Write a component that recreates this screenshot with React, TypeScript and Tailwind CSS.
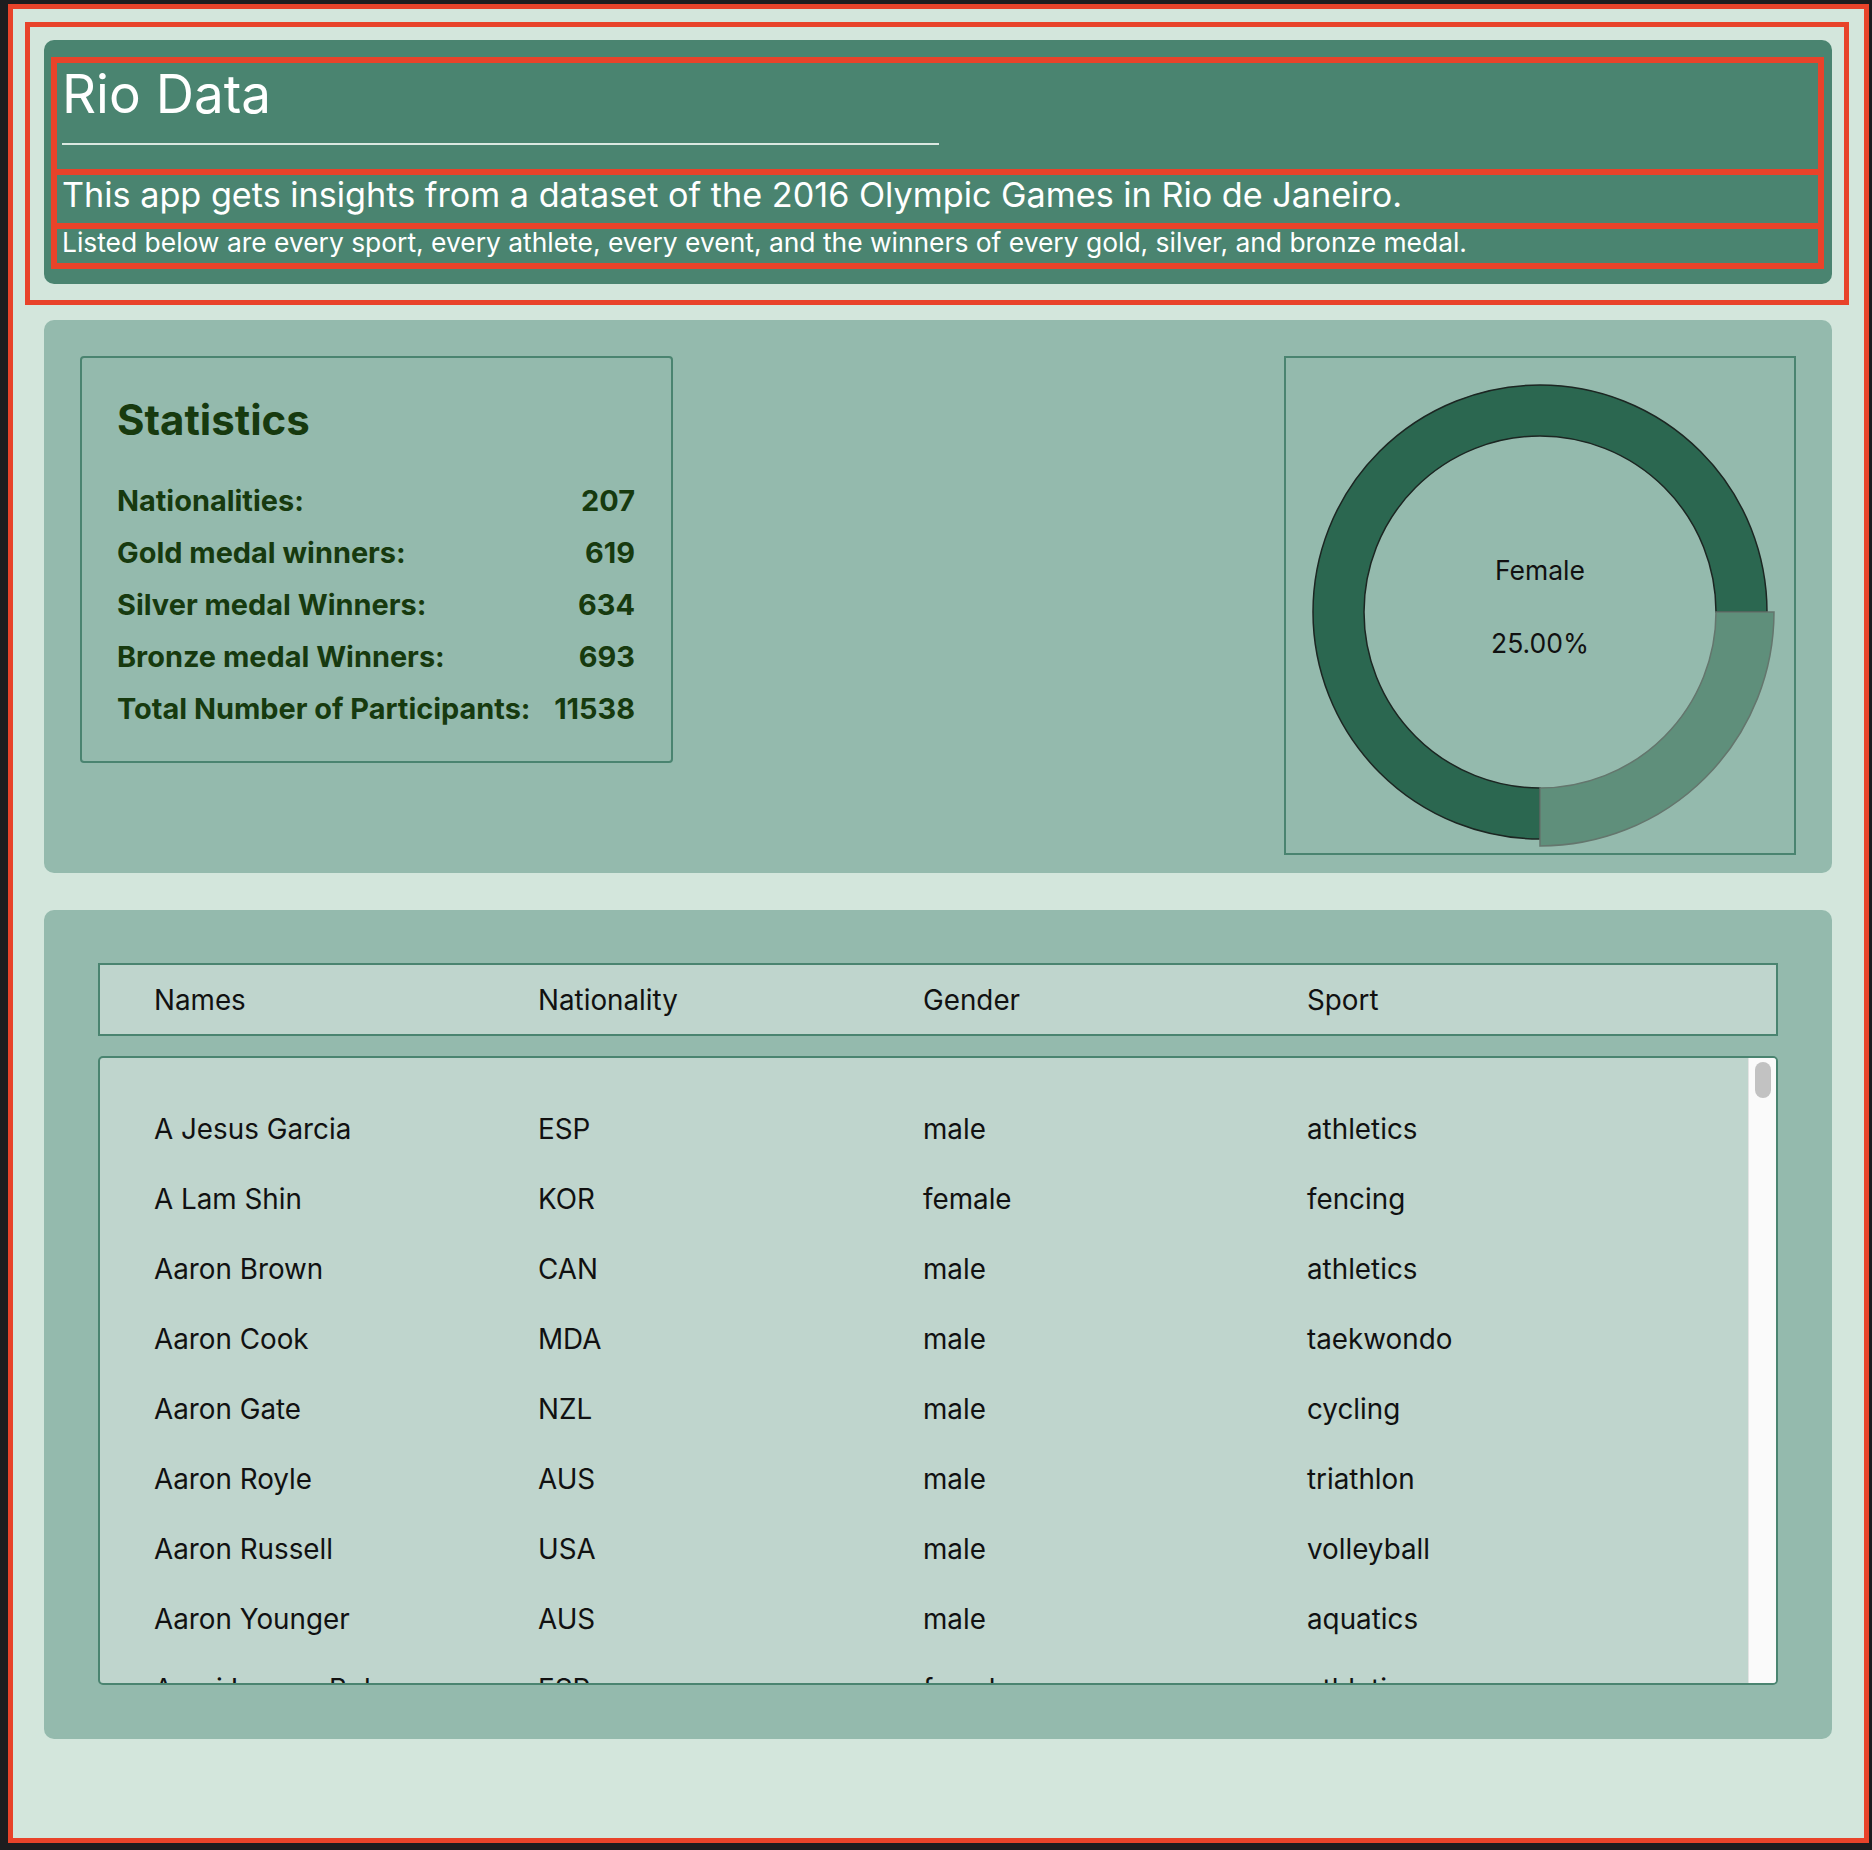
const athletes = [
  { name: "A Jesus Garcia", nationality: "ESP", sex: "male", sport: "athletics" },
  { name: "A Lam Shin", nationality: "KOR", sex: "female", sport: "fencing" },
  { name: "Aaron Brown", nationality: "CAN", sex: "male", sport: "athletics" },
  { name: "Aaron Cook", nationality: "MDA", sex: "male", sport: "taekwondo" },
  { name: "Aaron Gate", nationality: "NZL", sex: "male", sport: "cycling" },
  { name: "Aaron Royle", nationality: "AUS", sex: "male", sport: "triathlon" },
  { name: "Aaron Russell", nationality: "USA", sex: "male", sport: "volleyball" },
  { name: "Aaron Younger", nationality: "AUS", sex: "male", sport: "aquatics" },
  { name: "Aauri Lorena Bokesa", nationality: "ESP", sex: "female", sport: "athletics" },
  { name: "Ababel Yeshaneh", nationality: "ETH", sex: "female", sport: "athletics" },
]

const stats = [
  { label: "Nationalities:", value: 207 },
  { label: "Gold medal winners:", value: 619 },
  { label: "Silver medal Winners:", value: 634 },
  { label: "Bronze medal Winners:", value: 693 },
  { label: "Total Number of Participants:", value: 11538 },
]

function GenderChart({ female = 25 }: { female?: number }) {
  const cx = 254
  const cy = 254
  const ro = 227
  const ri = 176
  const rl = 234

  const dark = `M ${cx} ${cy + ro} A ${ro} ${ro} 0 1 1 ${cx + ro} ${cy} L ${cx + ri} ${cy} A ${ri} ${ri} 0 1 0 ${cx} ${cy + ri} Z`
  const light = `M ${cx + rl} ${cy} A ${rl} ${rl} 0 0 1 ${cx} ${cy + rl} L ${cx} ${cy + ri} A ${ri} ${ri} 0 0 0 ${cx + ri} ${cy} Z`

  return (
    <svg width="508" height="495" viewBox="0 0 508 495" className="block">
      <path d={dark} fill="#2b6750" stroke="#1c2622" strokeWidth="1.5" />
      <path d={light} fill="#5f8f7b" stroke="#64766d" strokeWidth="1.5" />
      <text x={cx} y={222} textAnchor="middle" fontSize="26.5" fill="#111" fontFamily="Inter, sans-serif">
        Female
      </text>
      <text x={cx} y={295} textAnchor="middle" fontSize="26.5" fill="#111" fontFamily="Inter, sans-serif">
        {female.toFixed(2)}%
      </text>
    </svg>
  )
}

export default function App() {
  return (
    <div className="min-h-[1850px] bg-[#1d1d1f] pt-[4px] pl-[8px] pr-[3px] pb-[7px] font-['Inter',sans-serif]">
      <div className="h-[1839px] border-[5px] border-[#e8432a] bg-[#d3e6dc]">

        {/* Header */}
        <div className="ml-[12px] mr-[15px] mt-[13px] border-[5px] border-[#e8432a] pt-[13px] pl-[14px] pr-[12px] pb-[16px]">
          <div className="bg-[#4a8470] rounded-[10px] pt-[17px] pl-[7px] pr-[8px] pb-[15px] text-white">
            <div className="border-[6px] border-[#e8432a] pl-[5px] pb-[24px]">
              <h1 className="text-[53px] leading-[62px] font-normal">Rio Data</h1>
              <div className="mt-[18px] h-[2px] w-[877px] bg-[#dbe8e1]" />
            </div>
            <div className="border-x-[6px] border-b-[6px] border-[#e8432a] pl-[5px] pb-[8px]">
              <p className="text-[34.2px] leading-[40px]">
                This app gets insights from a dataset of the 2016 Olympic Games in Rio de Janeiro.
              </p>
            </div>
            <div className="border-x-[6px] border-b-[6px] border-[#e8432a] pl-[5px] pb-[8px]">
              <p className="text-[26.4px] leading-[26px]">
                Listed below are every sport, every athlete, every event, and the winners of every gold, silver, and bronze medal.
              </p>
            </div>
          </div>
        </div>

        <div className="ml-[31px] mr-[32px] mt-[15px]">

          {/* Statistics + chart */}
          <div className="bg-[#94baad] rounded-[10px] flex items-start justify-between pl-[36px] pr-[36px] pt-[36px] pb-[18px]">
            <div className="w-[593px] border-2 border-[#4a8470] rounded-[4px] pt-[37px] pl-[35px] pr-[36px] pb-[26px] text-[#173a0f]">
              <h2 className="text-[42px] leading-[50px] font-bold">Statistics</h2>
              <div className="mt-[30px]">
                {stats.map((s) => (
                  <div key={s.label} className="flex justify-between text-[28.9px] leading-[52px] font-bold">
                    <span>{s.label}</span>
                    <span>{s.value}</span>
                  </div>
                ))}
              </div>
            </div>
            <div className="w-[512px] h-[499px] border-2 border-[#4a8470]">
              <GenderChart female={25} />
            </div>
          </div>

          {/* Athletes table */}
          <div className="mt-[37px] bg-[#94baad] rounded-[10px] pt-[53px] px-[54px] pb-[54px] text-[#111] text-[27.8px]">
            <div className="h-[73px] border-2 border-[#4a8470] bg-[#bfd5cd] pl-[54px] pt-[3px] grid grid-cols-[384px_385px_384px_1fr] items-center">
              <span>Names</span>
              <span>Nationality</span>
              <span>Gender</span>
              <span>Sport</span>
            </div>
            <div className="mt-[20px] h-[629px] border-2 border-[#4a8470] rounded-[5px] bg-[#bfd5cd] flex overflow-hidden">
              <div className="flex-1 pt-[37px] pl-[54px] overflow-hidden">
                {athletes.map((a) => (
                  <div key={a.name} className="h-[70px] grid grid-cols-[384px_385px_384px_1fr] items-center">
                    <span>{a.name}</span>
                    <span>{a.nationality}</span>
                    <span>{a.sex}</span>
                    <span>{a.sport}</span>
                  </div>
                ))}
              </div>
              <div className="w-[28px] shrink-0 bg-[#fafafa] border-l border-[#e4e4e4] pt-[4px] pl-[6px]">
                <div className="w-[16px] h-[36px] rounded-full bg-[#c2c2c2]" />
              </div>
            </div>
          </div>
        </div>
      </div>
    </div>
  )
}
